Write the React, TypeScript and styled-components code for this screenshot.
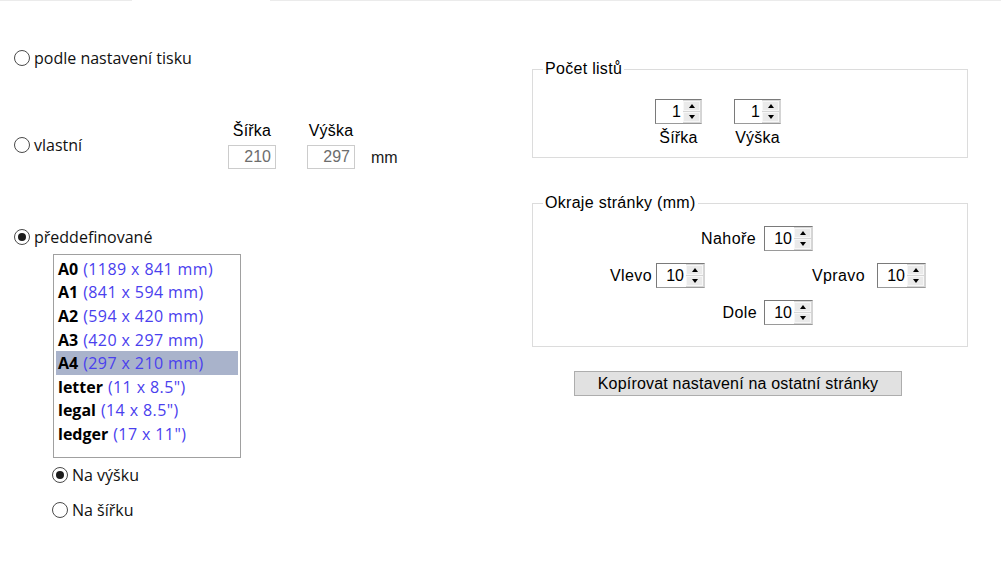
import React from "react";
import styled, { createGlobalStyle } from "styled-components";

const uiFont = `"Open Sans", "Noto Sans", sans-serif`;
const winFont = `"Liberation Sans", Arial, sans-serif`;

const GlobalStyle = createGlobalStyle`
  html, body {
    margin: 0;
    padding: 0;
    background: #fff;
  }
  body {
    width: 1001px;
    height: 575px;
    overflow: hidden;
    font-family: ${winFont};
    color: #000;
  }
`;

// => tab strip edge at the very top
const TabLine = styled.div`
  display: flex;
  height: 1px;
`;
const TabEdge = styled.div<{ $w?: number }>`
  background: #ebebeb;
  ${(p) => (p.$w ? `width: ${p.$w}px;` : "flex: 1;")}
`;
const TabGap = styled.div<{ $w: number }>`
  width: ${(p) => p.$w}px;
`;

const Body = styled.div`
  display: flex;
`;

const LeftCol = styled.div`
  width: 532px;
  padding-left: 14px;
  box-sizing: border-box;
  display: flex;
  flex-direction: column;
  align-items: flex-start;
`;

const RightCol = styled.div`
  padding-top: 60px;
  display: flex;
  flex-direction: column;
  align-items: flex-start;
`;

// => radio options
const RadioRow = styled.label<{ $mt: number; $ml?: number; $w?: number }>`
  display: flex;
  align-items: center;
  gap: 4px;
  height: 18px;
  margin-top: ${(p) => p.$mt}px;
  margin-left: ${(p) => p.$ml ?? 0}px;
  ${(p) => (p.$w ? `width: ${p.$w}px; flex: none;` : "")}
  font-family: ${uiFont};
  font-size: 16px;
  color: #111;
  white-space: nowrap;
`;

const RadioDot = styled.span<{ $on?: boolean }>`
  position: relative;
  flex: none;
  width: 16px;
  height: 16px;
  box-sizing: border-box;
  border-radius: 50%;
  border: 1px solid #4a4a4a;
  background: #fff;
  ${(p) =>
    p.$on &&
    `&::after {
      content: "";
      position: absolute;
      inset: 3px;
      border-radius: 50%;
      background: #1c1c1c;
    }`}
`;

const Radio = (props: { label: string; on?: boolean; mt: number; ml?: number; w?: number }) => (
  <RadioRow $mt={props.mt} $ml={props.ml} $w={props.w}>
    <RadioDot $on={props.on} />
    {props.label}
  </RadioRow>
);

// => custom size row
const CustomBlock = styled.div`
  display: flex;
  align-items: flex-start;
  margin-top: 55px;
`;

const Fields = styled.div`
  display: flex;
  align-items: flex-end;
`;

const FieldCol = styled.div<{ $mr: number }>`
  display: flex;
  flex-direction: column;
  align-items: center;
  gap: 5px;
  margin-right: ${(p) => p.$mr}px;
`;

const FieldLabel = styled.div`
  font: 16px/18px ${winFont};
  letter-spacing: 0.2px;
  color: #000;
  white-space: nowrap;
`;

const FieldInput = styled.div`
  width: 48px;
  height: 24px;
  box-sizing: border-box;
  border: 1px solid #cccccc;
  padding-right: 4px;
  text-align: right;
  font: 16px/22px ${winFont};
  color: #6d6d6d;
`;

const Unit = styled.div`
  height: 24px;
  font: 16px/26px ${winFont};
  color: #1a1a1a;
`;

// => predefined list
const ListBox = styled.div`
  width: 188px;
  height: 204px;
  box-sizing: border-box;
  margin: 8px 0 0 39px;
  padding: 2px;
  border: 1px solid #a0a0a0;
  background: #fff;
`;

const ListItem = styled.div<{ $sel?: boolean }>`
  display: flex;
  align-items: center;
  gap: 5px;
  height: 23.6px;
  padding-left: 2px;
  font-family: ${uiFont};
  font-size: 16px;
  letter-spacing: 0.4px;
  white-space: nowrap;
  background: ${(p) => (p.$sel ? "#a9b3cb" : "transparent")};
`;

const ItemName = styled.span`
  font-weight: 700;
  letter-spacing: 0;
  color: #000;
`;

const ItemSize = styled.span`
  color: #4a40ee;
`;

// => group boxes
const Group = styled.fieldset<{ $mt?: number }>`
  margin: ${(p) => p.$mt ?? 0}px 0 0;
  padding: 0;
  width: 436px;
  box-sizing: border-box;
  min-width: 0;
  border: 1px solid #dcdcdc;
`;

const Legend = styled.legend`
  margin-left: 10px;
  padding: 0 2px;
  font: 16px/16px ${winFont};
  letter-spacing: 0.3px;
  color: #000;
`;

const CountRow = styled.div`
  display: flex;
  gap: 32px;
  padding: 22px 0 10px 122px;
`;

const CountCol = styled.div`
  display: flex;
  flex-direction: column;
  align-items: center;
  gap: 5px;
`;

const MarginGrid = styled.div`
  display: grid;
  grid-template-columns: 172px 108px 113px;
  grid-template-rows: 25px 25px 25px;
  row-gap: 12px;
  padding: 15px 0 21px;
`;

const MarginCell = styled.div<{ $col: string; $row: number; $gap: number }>`
  grid-column: ${(p) => p.$col};
  grid-row: ${(p) => p.$row};
  display: flex;
  justify-content: flex-end;
  align-items: center;
  gap: ${(p) => p.$gap}px;
  font: 16px/18px ${winFont};
  letter-spacing: 0.4px;
  white-space: nowrap;
`;

// => spinner control
const SpinBox = styled.div<{ $w: number }>`
  display: flex;
  width: ${(p) => p.$w}px;
  height: 25px;
  box-sizing: border-box;
  border: 1px solid;
  border-color: #7a7a7a #d4d4d4 #9a9a9a #7a7a7a;
  background: #fff;
  letter-spacing: 0;
`;

const SpinValue = styled.div`
  flex: 1;
  padding-right: 2px;
  text-align: right;
  font: 16px/23px ${winFont};
  color: #000;
`;

const SpinButtons = styled.div`
  width: 18px;
  display: flex;
  flex-direction: column;
  gap: 1px;
  padding: 1px 1px 1px 0;
  box-sizing: border-box;
  background: #d6d6d6;
`;

const SpinButton = styled.div<{ $down?: boolean }>`
  flex: 1;
  display: flex;
  align-items: center;
  justify-content: center;
  background: #eaeaea;
  border: 1px solid #f7f7f7;
  &::before {
    content: "";
    border-left: 3.5px solid transparent;
    border-right: 3.5px solid transparent;
    ${(p) => (p.$down ? "border-top: 4px solid #000;" : "border-bottom: 4px solid #000;")}
  }
`;

const Spinner = (props: { value: number; w: number }) => (
  <SpinBox $w={props.w}>
    <SpinValue>{props.value}</SpinValue>
    <SpinButtons>
      <SpinButton />
      <SpinButton $down />
    </SpinButtons>
  </SpinBox>
);

const CopyButton = styled.button`
  margin: 24px 0 0 42px;
  width: 328px;
  height: 25px;
  padding: 0;
  background: #e1e1e1;
  border: 1px solid #adadad;
  font: 16px/23px ${winFont};
  letter-spacing: 0.2px;
  color: #000;
`;

const formats = [
  { name: "A0", size: "(1189 x 841 mm)" },
  { name: "A1", size: "(841 x 594 mm)" },
  { name: "A2", size: "(594 x 420 mm)" },
  { name: "A3", size: "(420 x 297 mm)" },
  { name: "A4", size: "(297 x 210 mm)" },
  { name: "letter", size: "(11 x 8.5\")" },
  { name: "legal", size: "(14 x 8.5\")" },
  { name: "ledger", size: "(17 x 11\")" },
];

export default function App() {
  return (
    <>
      <GlobalStyle />
      <TabLine>
        <TabEdge $w={132} />
        <TabGap $w={138} />
        <TabEdge />
      </TabLine>
      <Body>
        <LeftCol>
          <Radio label="podle nastavení tisku" mt={48} />

          <CustomBlock>
            <Radio label="vlastní" mt={14} w={214} />
            <Fields>
              <FieldCol $mr={31}>
                <FieldLabel>Šířka</FieldLabel>
                <FieldInput>210</FieldInput>
              </FieldCol>
              <FieldCol $mr={16}>
                <FieldLabel>Výška</FieldLabel>
                <FieldInput>297</FieldInput>
              </FieldCol>
              <Unit>mm</Unit>
            </Fields>
          </CustomBlock>

          <Radio label="předdefinované" on mt={59} />
          <ListBox>
            {formats.map((f) => (
              <ListItem key={f.name} $sel={f.name === "A4"}>
                <ItemName>{f.name}</ItemName>
                <ItemSize>{f.size}</ItemSize>
              </ListItem>
            ))}
          </ListBox>
          <Radio label="Na výšku" on mt={8} ml={38} />
          <Radio label="Na šířku" mt={17} ml={38} />
        </LeftCol>

        <RightCol>
          <Group>
            <Legend>Počet listů</Legend>
            <CountRow>
              <CountCol>
                <Spinner value={1} w={47} />
                <FieldLabel>Šířka</FieldLabel>
              </CountCol>
              <CountCol>
                <Spinner value={1} w={47} />
                <FieldLabel>Výška</FieldLabel>
              </CountCol>
            </CountRow>
          </Group>

          <Group $mt={37}>
            <Legend>Okraje stránky (mm)</Legend>
            <MarginGrid>
              <MarginCell $col="1 / 3" $row={1} $gap={8}>
                Nahoře <Spinner value={10} w={49} />
              </MarginCell>
              <MarginCell $col="1 / 2" $row={2} $gap={4}>
                Vlevo <Spinner value={10} w={49} />
              </MarginCell>
              <MarginCell $col="2 / 4" $row={2} $gap={12}>
                Vpravo <Spinner value={10} w={49} />
              </MarginCell>
              <MarginCell $col="1 / 3" $row={3} $gap={7}>
                Dole <Spinner value={10} w={49} />
              </MarginCell>
            </MarginGrid>
          </Group>

          <CopyButton>Kopírovat nastavení na ostatní stránky</CopyButton>
        </RightCol>
      </Body>
    </>
  );
}
